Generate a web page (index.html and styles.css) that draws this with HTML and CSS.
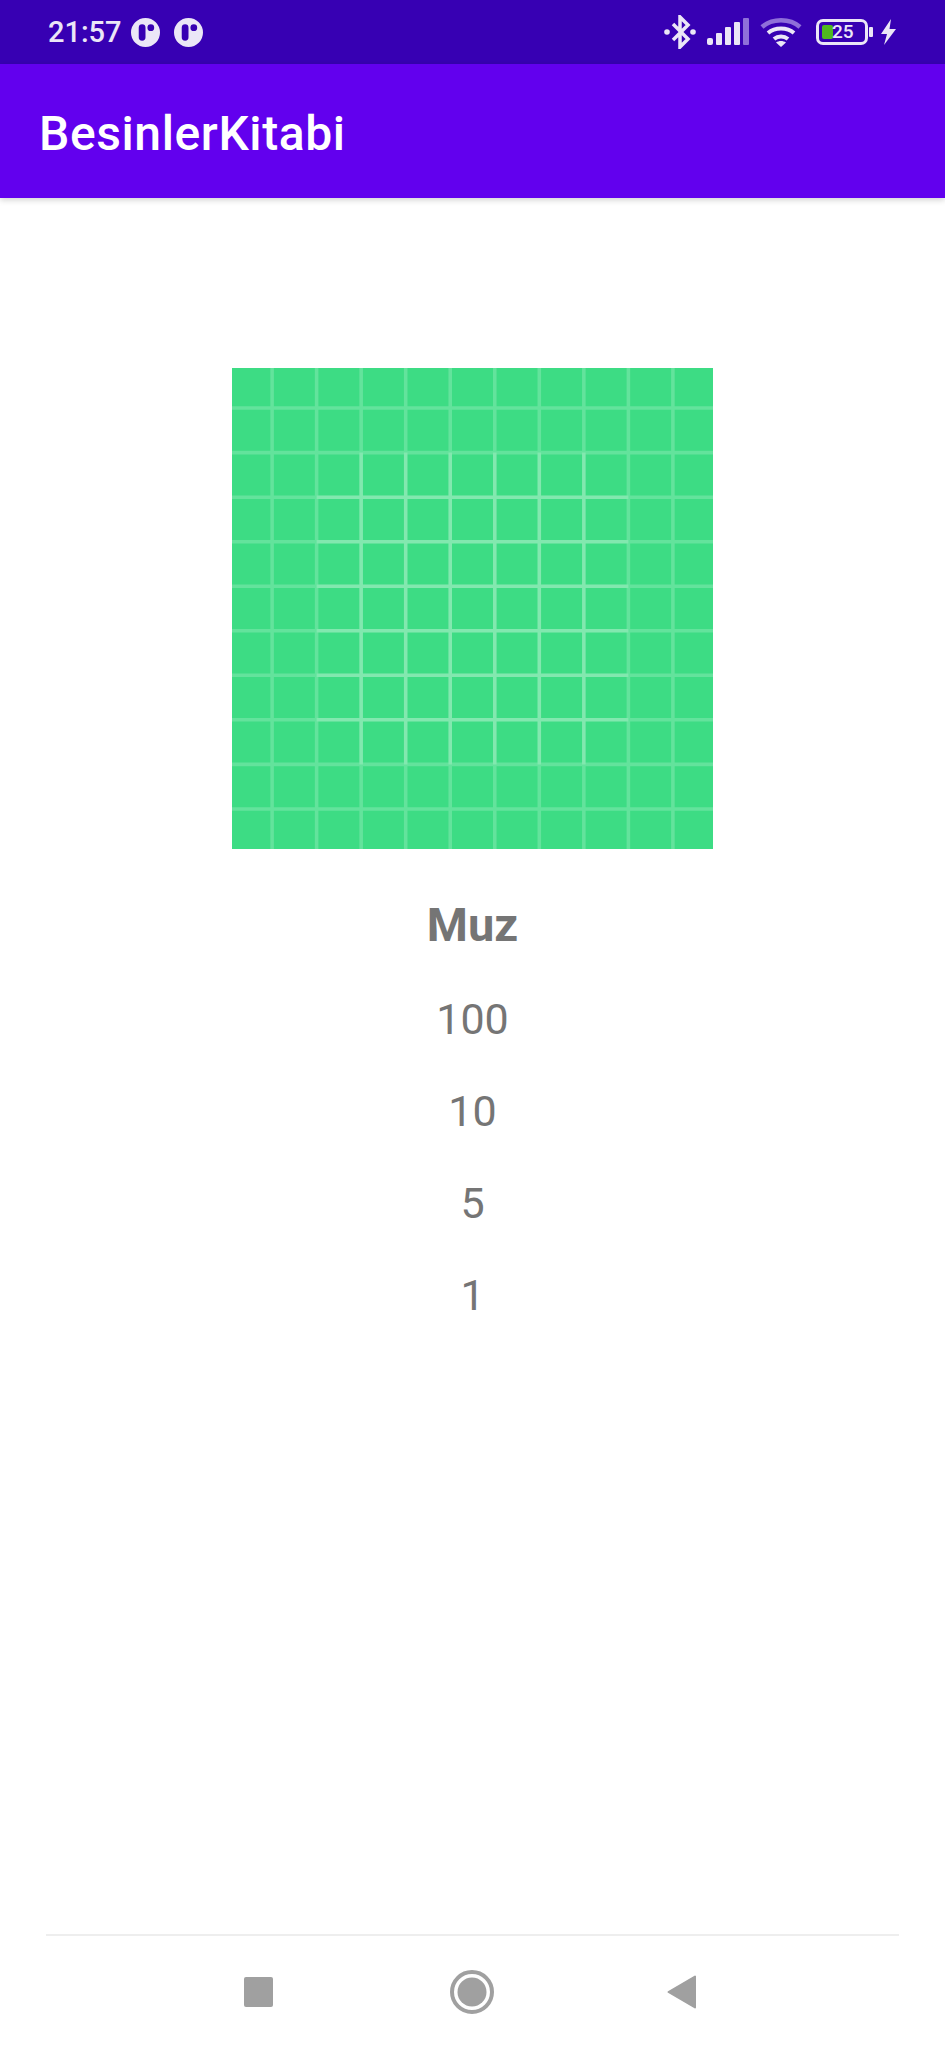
FILE: index.html
```html
<!DOCTYPE html>
<html lang="tr">
<head>
<meta charset="utf-8">
<title>BesinlerKitabi</title>
<link rel="stylesheet" href="styles.css">
</head>
<body>
<div class="screen">
  <div class="status">
    <div class="status-left">
      <span class="time">21:57</span>
      <svg class="notif" viewBox="0 0 30 30"><path fill="#ebe6f7" fill-rule="evenodd" d="M15 0a15 15 0 1 1 0 30a15 15 0 1 1 0-30zM11.500 6.500a3.500 3.500 0 0 0-3.500 3.500v10a3.500 3.500 0 0 0 7 0v-10a3.500 3.500 0 0 0-3.500-3.500zM20.500 6.500a3.500 3.500 0 1 0 0 7a3.500 3.500 0 1 0 0-7z"/></svg>
      <svg class="notif second" viewBox="0 0 30 30"><path fill="#ebe6f7" fill-rule="evenodd" d="M15 0a15 15 0 1 1 0 30a15 15 0 1 1 0-30zM11.500 6.500a3.500 3.500 0 0 0-3.500 3.500v10a3.500 3.500 0 0 0 7 0v-10a3.500 3.500 0 0 0-3.500-3.500zM20.500 6.500a3.500 3.500 0 1 0 0 7a3.500 3.500 0 1 0 0-7z"/></svg>
    </div>
    <div class="status-right">
      <svg class="bt" width="32" height="34" viewBox="0 0 32 34"><path d="M9 9l15 15l-8 8v-30l8 8l-15 15" fill="none" stroke="#ebe6f7" stroke-width="3.500"/><circle cx="3" cy="17" r="2.800" fill="#ebe6f7"/><circle cx="29" cy="17" r="2.800" fill="#ebe6f7"/></svg>
      <svg class="signal" width="42" height="28" viewBox="0 0 42 28"><rect x="0" y="20" width="6" height="7" rx="2" fill="#ebe6f7"/><rect x="9" y="15" width="6" height="12" rx="1" fill="#ebe6f7"/><rect x="18" y="9" width="6" height="18" rx="1" fill="#ebe6f7"/><rect x="27" y="4" width="6" height="23" rx="1" fill="#ebe6f7"/><rect x="36" y="0" width="6" height="27" rx="1" fill="#8f6fd9"/></svg>
      <svg class="wifi" width="42" height="30" viewBox="0 0 42 30"><path d="M2 10C12 1 30 1 40 10" fill="none" stroke="#8f6fd9" stroke-width="4.500"/><path d="M8 16C15 10 27 10 34 16" fill="none" stroke="#ebe6f7" stroke-width="4"/><path d="M14 22C18 18.500 24 18.500 28 22" fill="none" stroke="#ebe6f7" stroke-width="4"/><path d="M21 30l-5-4.500c3-2 7-2 10 0z" fill="#ebe6f7"/></svg>
      <div class="battery">
        <div class="battery-body">
          <span class="battery-fill"></span>
          <span class="battery-num">25</span>
        </div>
        <span class="battery-nub"></span>
      </div>
      <svg class="bolt" width="17" height="26" viewBox="0 0 17 26"><path d="M11 0L1 15h6L4 26L16 10h-6.500z" fill="#ebe6f7"/></svg>
    </div>
  </div>
  <header class="appbar">BesinlerKitabi</header>
  <main class="content">
    <svg class="food-image" viewBox="0 0 108 108">
      <rect width="108" height="108" fill="#3ddc84"/>
      <path class="grid" d="M9 0V108M19 0V108M29 0V108M39 0V108M49 0V108M59 0V108M69 0V108M79 0V108M89 0V108M99 0V108M0 9H108M0 19H108M0 29H108M0 39H108M0 49H108M0 59H108M0 69H108M0 79H108M0 89H108M0 99H108"/>
      <path class="grid" d="M19 29H89M19 39H89M19 49H89M19 59H89M19 69H89M19 79H89M29 19V89M39 19V89M49 19V89M59 19V89M69 19V89M79 19V89"/>
    </svg>
    <h1 class="food-name">Muz</h1>
    <p class="food-value">100</p>
    <p class="food-value">10</p>
    <p class="food-value">5</p>
    <p class="food-value">1</p>
  </main>
  <nav class="navbar">
    <div class="nav-icons">
      <span class="nav-square"></span>
      <svg class="nav-home" width="44" height="44" viewBox="0 0 44 44"><circle cx="22" cy="22" r="20" fill="none" stroke="#a0a0a0" stroke-width="4"/><circle cx="22" cy="22" r="14.500" fill="#a0a0a0"/></svg>
      <svg class="nav-back" width="30" height="34" viewBox="0 0 30 34"><path d="M28 1.500V32.500L1.500 17z" fill="#a0a0a0" stroke="#a0a0a0" stroke-width="2" stroke-linejoin="round"/></svg>
    </div>
  </nav>
</div>
</body>
</html>
```
FILE: styles.css
```css
* { box-sizing: border-box; }
html, body { margin: 0; padding: 0; background: #fff; }
.screen {
  width: 945px;
  height: 2048px;
  display: flex;
  flex-direction: column;
  font-family: Roboto, "Noto Sans", sans-serif;
  overflow: hidden;
}
.status {
  height: 64px;
  flex: none;
  background: #3700b3;
  display: flex;
  justify-content: space-between;
  align-items: center;
  padding: 0 48px 0 48px;
  color: #ebe6f7;
}
.status-left { display: flex; align-items: center; }
.time { font-size: 29px; font-weight: 500; line-height: 34px; }
.notif { width: 29px; height: 29px; margin-left: 9px; display: block; }
.notif.second { margin-left: 14px; }
.status-right { display: flex; align-items: center; }
.bt { display: block; margin-right: 11px; }
.signal { display: block; margin-right: 11px; }
.wifi { display: block; margin-right: 14px; }
.battery { display: flex; align-items: center; margin-right: 7px; }
.battery-body {
  width: 52px;
  height: 26px;
  border: 3px solid #ebe6f7;
  border-radius: 7px;
  display: flex;
  align-items: center;
  padding: 3px;
}
.battery-fill { width: 11px; height: 14px; background: #4fb81f; border-radius: 2px; }
.battery-num {
  font-size: 19px;
  font-weight: 500;
  line-height: 20px;
  margin-left: -1px;
  color: #ebe6f7;
}
.battery-nub { width: 4px; height: 10px; background: #ebe6f7; margin-left: 1px; border-radius: 1px; }
.bolt { display: block; }
.appbar {
  height: 134px;
  flex: none;
  background: #6200ee;
  color: #fff;
  font-size: 48px;
  font-weight: 500;
  letter-spacing: .6px;
  line-height: 140px;
  padding-left: 39px;
  box-shadow: 0 2px 6px rgba(0, 0, 0, .18);
  position: relative;
}
.content {
  flex: 1;
  display: flex;
  flex-direction: column;
  align-items: center;
  padding-top: 170px;
}
.food-image { width: 481px; height: 481px; display: block; margin-bottom: 30px; }
.grid { fill: none; stroke: #fff; stroke-opacity: .2; stroke-width: .8; filter: blur(.12px); }
.food-name {
  margin: 0 0 2px;
  font-size: 47px;
  font-weight: 700;
  line-height: 92px;
  color: #757575;
}
.food-value {
  margin: 0;
  font-size: 43px;
  font-weight: 400;
  line-height: 92px;
  color: #757575;
}
.navbar { height: 114px; flex: none; padding: 0 46px; }
.nav-icons {
  height: 100%;
  border-top: 2px solid #eeeeee;
  display: flex;
  align-items: center;
  padding: 0 0 0 198px;
}
.nav-square { width: 29px; height: 30px; background: #a0a0a0; border-radius: 2px; margin-right: 177px; }
.nav-home { display: block; margin-right: 173px; }
.nav-back { display: block; }
```
